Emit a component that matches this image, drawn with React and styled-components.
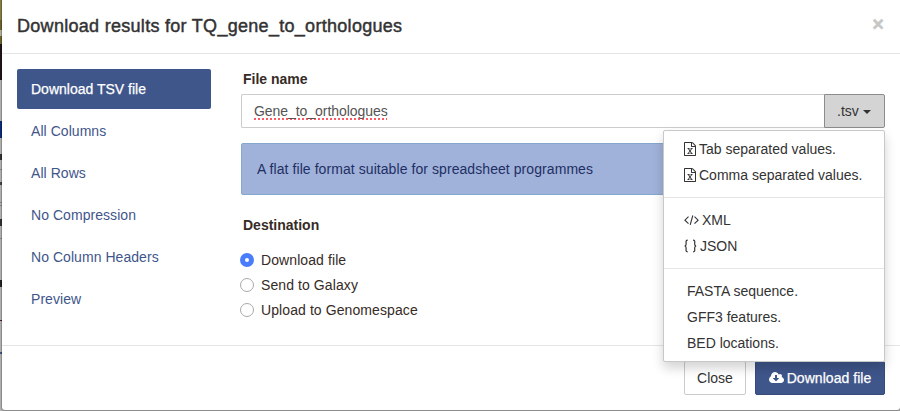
import React from "react";
import styled, { createGlobalStyle, css } from "styled-components";

const Global = createGlobalStyle`
  *, *::before, *::after { box-sizing: border-box; }
  body { margin: 0; overflow: hidden; background: #b3b3b3; }
  body, button, input { font: 14px/20px "Liberation Sans", Arial, sans-serif; }
`;

const Backdrop = styled.div`
  display: flex;
  width: 900px;
  height: 411px;
  padding-left: 2px;
  background:
    linear-gradient(#b3b3b3 0 0) 2px 0 / 898px 100% no-repeat,
    linear-gradient(
      #8b7e43 0 20px, #6f632e 20px 30px, #b5b0a0 30px 36px, #71662f 36px 44px,
      #211519 44px 80px, #b3b3b3 80px 121px, #0c2a7c 121px 138px,
      #b3b3b3 138px 154px, #333 154px 160px, #b3b3b3 160px 169px, #888 169px 170px,
      #b3b3b3 170px 182px, #444 182px 185px, #b3b3b3 185px 202px, #888 202px 203px,
      #b3b3b3 203px 205px, #888 205px 206px, #b3b3b3 206px 219px, #333 219px 226px,
      #b3b3b3 226px 238px, #888 238px 239px, #b3b3b3 239px 280px, #222 280px 287px,
      #b3b3b3 287px 320px, #521c24 320px 321px, #b3b3b3 321px 352px,
      #3d5488 352px 354px, #b3b3b3 354px
    );
`;

const Dialog = styled.div`
  display: flex;
  flex-direction: column;
  width: 898px;
  height: 410px;
  background: #fff;
  border-radius: 0 0 3px 3px;
  box-shadow: 0 0 1px 1px rgba(0, 0, 0, 0.25);
`;

const Header = styled.header`
  display: flex;
  justify-content: space-between;
  height: 54px;
  padding: 14px 16px 0 15px;
  border-bottom: 1px solid #e5e5e5;
`;

const Title = styled.h4`
  margin: 0;
  font-size: 18px;
  font-weight: 400;
  line-height: 24px;
  letter-spacing: 0.29px;
  color: #333;
  -webkit-text-stroke: 0.45px #333;
`;

const Dismiss = styled.button`
  width: 12px;
  height: 20px;
  padding: 0;
  border: 0;
  background: none;
  font-size: 20px;
  font-weight: 700;
  line-height: 19px;
  color: #c6c6c6;
  -webkit-text-stroke: 0.4px #c6c6c6;
`;

const Body = styled.main`
  display: grid;
  grid-template-columns: 194px 644px;
  column-gap: 30px;
  height: 291px;
  padding: 15px 15px 0;
`;

const Nav = styled.nav`
  display: flex;
  flex-direction: column;
  gap: 2px;
`;

const NavLink = styled.a`
  height: 40px;
  padding: 10px 14px;
  border-radius: 2px;
  color: #3f568b;
  letter-spacing: 0.05px;
  ${(p) => p.$active && css`
    color: #fff;
    background: #3f568b;
    letter-spacing: 0;
    -webkit-text-stroke: 0.25px #fff;
  `}
`;

const Form = styled.form`
  display: flex;
  flex-direction: column;
`;

const Label = styled.div`
  height: 20px;
  margin-bottom: 5px;
  padding-left: 2px;
  font-weight: 700;
  color: #362b26;
`;

const InputGroup = styled.div`
  display: flex;
  position: relative;
  height: 34px;
`;

const FileNameField = styled.div`
  flex: 1;
  padding: 6px 12px;
  border: 1px solid #ccc;
  border-right: 0;
  border-radius: 2px 0 0 2px;
  color: #555;
  letter-spacing: -0.05px;
`;

const Misspelled = styled.span`
  text-decoration: underline dotted #ff5a64 1.5px;
  text-decoration-skip-ink: none;
  text-underline-offset: 2px;
`;

const FormatToggle = styled.button`
  display: flex;
  align-items: center;
  gap: 4px;
  width: 61px;
  padding: 0 0 0 12px;
  border: 1px solid #8c8c8c;
  border-radius: 0 2px 2px 0;
  background: #d4d4d4;
  color: #333;
`;

const Caret = styled.span`
  margin-top: 2px;
  border: 4px solid transparent;
  border-top-color: #333;
  border-bottom: 0;
`;

const Menu = styled.ul`
  position: absolute;
  z-index: 2;
  top: 36px;
  right: 0;
  width: 222px;
  margin: 0;
  padding: 5px 0;
  border: 1px solid #c8c8c8;
  border-radius: 2px;
  background: #fff;
  box-shadow: 0 6px 12px rgba(0, 0, 0, 0.175);
  list-style: none;
`;

const MenuItem = styled.li`
  display: flex;
  align-items: center;
  gap: 3px;
  height: 26px;
  padding-left: ${(p) => (p.$plain ? 23 : 20)}px;
  color: #333;
  white-space: nowrap;
`;

const Divider = styled.li`
  height: 1px;
  margin: 9px 0;
  background: #e5e5e5;
`;

const Notice = styled.div`
  height: 52px;
  margin: 15px 0 20px;
  padding: 15px;
  border: 1px solid #85a6cd;
  border-radius: 2px;
  background: #a0b2da;
  color: #1f2f64;
  letter-spacing: 0.07px;
`;

const Options = styled.div`
  display: flex;
  flex-direction: column;
  gap: 5px;
  margin-top: 10px;
`;

const Option = styled.label`
  display: flex;
  align-items: center;
  gap: 7px;
  height: 20px;
  margin-left: -1px;
  color: #362b26;
  letter-spacing: 0.09px;
`;

const Radio = styled.span`
  width: 14px;
  height: 14px;
  border-radius: 50%;
  border: 1px solid #a9a9a9;
  background: #fff;
  ${(p) => p.$checked && css`
    border: 5px solid #4a7dfb;
  `}
`;

const Footer = styled.footer`
  display: flex;
  justify-content: flex-end;
  gap: 9px;
  padding: 15px 15px 0;
  border-top: 1px solid #e5e5e5;
`;

const Button = styled.button`
  display: flex;
  align-items: center;
  justify-content: center;
  gap: 3px;
  width: ${(p) => (p.$primary ? 130 : 62)}px;
  height: 34px;
  padding: 0;
  border: 1px solid ${(p) => (p.$primary ? "#374b7a" : "#ccc")};
  border-radius: 2px;
  background: ${(p) => (p.$primary ? "#3f568b" : "#fff")};
  color: ${(p) => (p.$primary ? "#fff" : "#333")};
  ${(p) => p.$primary && css`
    letter-spacing: 0.04px;
    -webkit-text-stroke: 0.25px #fff;
  `}
`;

const Icon = styled.svg`
  flex: none;
  display: block;
`;

const SheetIcon = () => (
  <Icon width="12" height="14" viewBox="128 0 1536 1792" fill="#333">
    <path d="M1596 380q28 28 48 76t20 88v1152q0 40-28 68t-68 28h-1344q-40 0-68-28t-28-68v-1600q0-40 28-68t68-28h896q40 0 88 20t76 48zm-444-244v376h376q-10-29-22-41l-313-313q-12-12-41-22zm384 1528v-1024h-416q-40 0-68-28t-28-68v-416h-768v1536h1280zm-979-234v106h281v-106h-75l103-161q5-7 10-16.5t7.5-13.5 3.5-4h2q1 4 5 10 2 4 4.5 7.5t6 8 6.5 8.5l107 161h-76v106h291v-106h-68l-192-273 195-282h67v-107h-279v107h74l-103 159q-4 7-10 16.5t-9 13.5l-2 3h-2q-1-4-5-10-6-11-17-23l-106-159h76v-107h-290v107h68l189 272-194 283h-68z" />
  </Icon>
);

const CodeIcon = () => (
  <Icon width="15" height="14" viewBox="0 0 15 14" fill="none" stroke="#333" strokeWidth="1.1">
    <path d="M4.5 3.7.9 7.2l3.6 3.5M10.5 3.7l3.6 3.5-3.6 3.5M8.8 2.5 6.2 11.9" />
  </Icon>
);

const BracesIcon = () => (
  <Icon width="13" height="14" viewBox="0 0 13 14" fill="none" stroke="#333" strokeWidth="1.2">
    <path d="M3.7 1.2C1.2 1.2 2.3 3.2 2.1 5.2Q2 6.8.7 7q1.3.2 1.4 1.8c.2 2-.9 4 1.6 4M9.1 1.2c2.5 0 1.4 2 1.6 4q.1 1.6 1.4 1.8-1.3.2-1.4 1.8c-.2 2 .9 4-1.6 4" />
  </Icon>
);

const CloudDownloadIcon = () => (
  <Icon width="15" height="14" viewBox="-64 0 1920 1792" fill="#fff">
    <path d="M1216 928q0-14-9-23t-23-9h-224v-352q0-13-9.5-22.5t-22.5-9.5h-192q-13 0-22.5 9.5t-9.5 22.5v352h-224q-13 0-22.5 9.5t-9.5 22.5q0 14 9 23l352 352q9 9 23 9t23-9l351-351q10-12 10-24zm640 224q0 159-112.5 271.5t-271.5 112.5h-1088q-185 0-316.5-131.5t-131.5-316.5q0-130 70-240t188-165q-2-30-2-43 0-212 150-362t362-150q156 0 285.5 87t188.5 231q71-62 166-62 106 0 181 75t75 181q0 76-41 138 130 31 213.5 135.5t83.5 238.5z" />
  </Icon>
);

const sections = ["Download TSV file", "All Columns", "All Rows", "No Compression", "No Column Headers", "Preview"];
const destinations = ["Download file", "Send to Galaxy", "Upload to Genomespace"];

export default function App() {
  return (
    <>
      <Global />
      <Backdrop>
        <Dialog>
          <Header>
            <Title>Download results for TQ_gene_to_orthologues</Title>
            <Dismiss>×</Dismiss>
          </Header>
          <Body>
            <Nav>
              {sections.map((name, i) => (
                <NavLink key={name} $active={i === 0}>{name}</NavLink>
              ))}
            </Nav>
            <Form>
              <Label>File name</Label>
              <InputGroup>
                <FileNameField><Misspelled>Gene_to_orthologues</Misspelled></FileNameField>
                <FormatToggle type="button">.tsv<Caret /></FormatToggle>
                <Menu>
                  <MenuItem><SheetIcon />Tab separated values.</MenuItem>
                  <MenuItem><SheetIcon />Comma separated values.</MenuItem>
                  <Divider />
                  <MenuItem><CodeIcon />XML</MenuItem>
                  <MenuItem><BracesIcon />JSON</MenuItem>
                  <Divider />
                  <MenuItem $plain>FASTA sequence.</MenuItem>
                  <MenuItem $plain>GFF3 features.</MenuItem>
                  <MenuItem $plain>BED locations.</MenuItem>
                </Menu>
              </InputGroup>
              <Notice>A flat file format suitable for spreadsheet programmes</Notice>
              <Label>Destination</Label>
              <Options>
                {destinations.map((name, i) => (
                  <Option key={name}><Radio $checked={i === 0} />{name}</Option>
                ))}
              </Options>
            </Form>
          </Body>
          <Footer>
            <Button>Close</Button>
            <Button $primary><CloudDownloadIcon />Download file</Button>
          </Footer>
        </Dialog>
      </Backdrop>
    </>
  );
}
